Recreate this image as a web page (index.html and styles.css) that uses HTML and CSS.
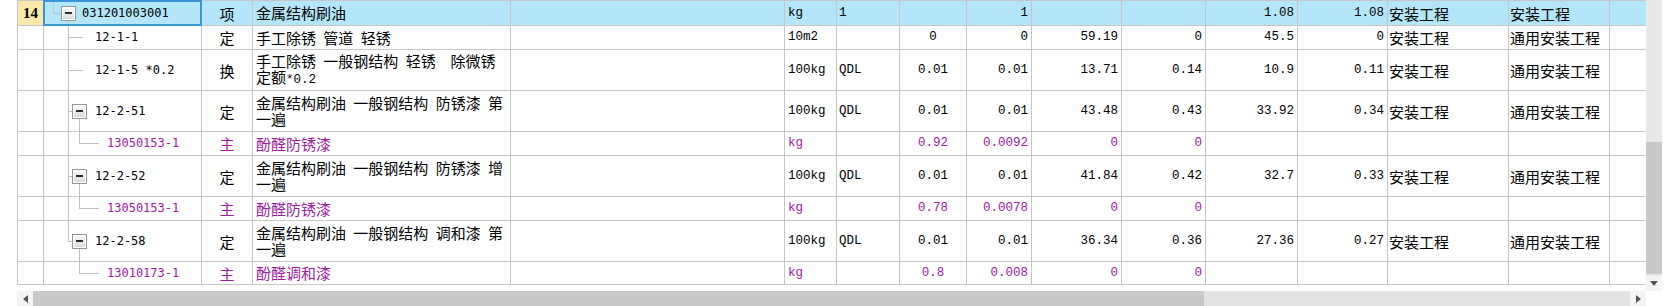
FILE: index.html
```html
<!DOCTYPE html>
<html lang="zh-CN">
<head>
<meta charset="utf-8">
<title>分部分项</title>
<link rel="stylesheet" href="styles.css">
</head>
<body>
<div class="window">
  <div class="gutter"></div>
  <div class="sheet">
    <div class="grid">
      <div class="row sel">
        <div class="hdr">14</div>
        <div class="tree"><span class="ind0"></span><span class="elbow w8"></span><span class="boxcol"><span class="box"></span></span><span class="code t6">031201003001</span></div>
        <div class="c">项</div>
        <div class="l name"><span class="txt">金属结构刷油</span></div>
        <div></div>
        <div class="l n">kg</div>
        <div class="l2 n">1</div>
        <div></div>
        <div class="r n">1</div>
        <div></div>
        <div></div>
        <div class="r n">1.08</div>
        <div class="r n">1.08</div>
        <div class="l1">安装工程</div>
        <div class="l1">安装工程</div>
        <div></div>
      </div>

      <div class="row">
        <div></div>
        <div class="tree"><span class="ind1"></span><span class="tee w15"></span><span class="code t12">12-1-1</span></div>
        <div class="c">定</div>
        <div class="l name"><span class="txt">手工除锈 管道 轻锈</span></div>
        <div></div>
        <div class="l n">10m2</div>
        <div></div>
        <div class="c n">0</div>
        <div class="r n">0</div>
        <div class="r n">59.19</div>
        <div class="r n">0</div>
        <div class="r n">45.5</div>
        <div class="r n">0</div>
        <div class="l1">安装工程</div>
        <div class="l1">通用安装工程</div>
        <div></div>
      </div>

      <div class="row">
        <div></div>
        <div class="tree"><span class="ind1"></span><span class="tee w15"></span><span class="code t12">12-1-5 *0.2</span></div>
        <div class="c">换</div>
        <div class="l name"><span class="txt">手工除锈 一般钢结构 轻锈  除微锈<br>定额<span class="n">*0.2</span></span></div>
        <div></div>
        <div class="l n">100kg</div>
        <div class="l2 n">QDL</div>
        <div class="c n">0.01</div>
        <div class="r n">0.01</div>
        <div class="r n">13.71</div>
        <div class="r n">0.14</div>
        <div class="r n">10.9</div>
        <div class="r n">0.11</div>
        <div class="l1">安装工程</div>
        <div class="l1">通用安装工程</div>
        <div></div>
      </div>

      <div class="row">
        <div></div>
        <div class="tree"><span class="ind1"></span><span class="tee w4"></span><span class="boxcol"><span class="box"></span></span><span class="code t8">12-2-51</span></div>
        <div class="c">定</div>
        <div class="l name"><span class="txt">金属结构刷油 一般钢结构 防锈漆 第<br>一遍</span></div>
        <div></div>
        <div class="l n">100kg</div>
        <div class="l2 n">QDL</div>
        <div class="c n">0.01</div>
        <div class="r n">0.01</div>
        <div class="r n">43.48</div>
        <div class="r n">0.43</div>
        <div class="r n">33.92</div>
        <div class="r n">0.34</div>
        <div class="l1">安装工程</div>
        <div class="l1">通用安装工程</div>
        <div></div>
      </div>

      <div class="row sub">
        <div></div>
        <div class="tree"><span class="ind1"></span><span class="guide"></span><span class="elbow w20"></span><span class="code t8">13050153-1</span></div>
        <div class="c">主</div>
        <div class="l name"><span class="txt">酚醛防锈漆</span></div>
        <div></div>
        <div class="l n">kg</div>
        <div></div>
        <div class="c n">0.92</div>
        <div class="r n">0.0092</div>
        <div class="r n">0</div>
        <div class="r n">0</div>
        <div></div>
        <div></div>
        <div></div>
        <div></div>
        <div></div>
      </div>

      <div class="row">
        <div></div>
        <div class="tree"><span class="ind1"></span><span class="tee w4"></span><span class="boxcol"><span class="box"></span></span><span class="code t8">12-2-52</span></div>
        <div class="c">定</div>
        <div class="l name"><span class="txt">金属结构刷油 一般钢结构 防锈漆 增<br>一遍</span></div>
        <div></div>
        <div class="l n">100kg</div>
        <div class="l2 n">QDL</div>
        <div class="c n">0.01</div>
        <div class="r n">0.01</div>
        <div class="r n">41.84</div>
        <div class="r n">0.42</div>
        <div class="r n">32.7</div>
        <div class="r n">0.33</div>
        <div class="l1">安装工程</div>
        <div class="l1">通用安装工程</div>
        <div></div>
      </div>

      <div class="row sub">
        <div></div>
        <div class="tree"><span class="ind1"></span><span class="guide"></span><span class="elbow w20"></span><span class="code t8">13050153-1</span></div>
        <div class="c">主</div>
        <div class="l name"><span class="txt">酚醛防锈漆</span></div>
        <div></div>
        <div class="l n">kg</div>
        <div></div>
        <div class="c n">0.78</div>
        <div class="r n">0.0078</div>
        <div class="r n">0</div>
        <div class="r n">0</div>
        <div></div>
        <div></div>
        <div></div>
        <div></div>
        <div></div>
      </div>

      <div class="row">
        <div></div>
        <div class="tree"><span class="ind1"></span><span class="elbow w4"></span><span class="boxcol"><span class="box"></span></span><span class="code t8">12-2-58</span></div>
        <div class="c">定</div>
        <div class="l name"><span class="txt">金属结构刷油 一般钢结构 调和漆 第<br>一遍</span></div>
        <div></div>
        <div class="l n">100kg</div>
        <div class="l2 n">QDL</div>
        <div class="c n">0.01</div>
        <div class="r n">0.01</div>
        <div class="r n">36.34</div>
        <div class="r n">0.36</div>
        <div class="r n">27.36</div>
        <div class="r n">0.27</div>
        <div class="l1">安装工程</div>
        <div class="l1">通用安装工程</div>
        <div></div>
      </div>

      <div class="row sub">
        <div></div>
        <div class="tree"><span class="ind2"></span><span class="elbow w20"></span><span class="code t8">13010173-1</span></div>
        <div class="c">主</div>
        <div class="l name"><span class="txt">酚醛调和漆</span></div>
        <div></div>
        <div class="l n">kg</div>
        <div></div>
        <div class="c n">0.8</div>
        <div class="r n">0.008</div>
        <div class="r n">0</div>
        <div class="r n">0</div>
        <div></div>
        <div></div>
        <div></div>
        <div></div>
        <div></div>
      </div>
    </div>
  </div>

  <div class="vscroll">
    <div class="vtrack"><div class="vthumb"></div></div>
    <div class="sbtn"><svg width="8" height="5" viewBox="0 0 8 5"><path d="M0 0H8L4 5Z" fill="#555"/></svg></div>
  </div>

  <div class="hscroll">
    <div class="sbtn hbtn"><svg width="5" height="8" viewBox="0 0 5 8"><path d="M5 0V8L0 4Z" fill="#555"/></svg></div>
    <div class="htrack"><div class="hthumb"></div></div>
    <div class="sbtn hbtn"><svg width="5" height="8" viewBox="0 0 5 8"><path d="M0 0V8L5 4Z" fill="#555"/></svg></div>
  </div>
</div>
</body>
</html>
```

FILE: styles.css
```css
* { box-sizing: border-box; }

html, body {
  margin: 0;
  padding: 0;
  background: #fff;
}

body {
  font-family: "Noto Sans CJK SC", sans-serif;
  font-size: 15px;
  line-height: 17px;
  color: #000;
}

.window {
  display: grid;
  grid-template-columns: 17px 1629px 16px 4px;
  grid-template-rows: 291px 15px;
  width: 1666px;
  height: 306px;
  overflow: hidden;
}

.gutter { grid-column: 1; grid-row: 1 / 3; }

.sheet { grid-column: 2; grid-row: 1; }

.grid {
  display: grid;
  grid-template-columns: 25px 157px 50px 257px 273px 51px 62px 66px 64px 89px 83px 91px 89px 120px 100px 36px;
  grid-template-rows: 24px 23px 40px 40px 23px 40px 23px 40px 22px;
  gap: 1px;
  padding: 1px 0 1px 1px;
  background: #c6c6c6;
}

.row { display: contents; }

.row > div {
  background: #fff;
  display: flex;
  align-items: center;
  overflow: hidden;
  white-space: nowrap;
  min-width: 0;
}

.row.sel > div { background: #b3e6f8; }

.row.sel > .hdr {
  background: #fce8a9;
  justify-content: center;
  font-family: "Liberation Serif", serif;
  font-weight: bold;
  font-size: 15px;
}

.row.sub > div { color: #a0209e; }

.l { padding-left: 3px; }
.l1 { padding-left: 1px; }
.l2 { padding-left: 2px; }
.r { justify-content: flex-end; padding-right: 3px; }
.c { justify-content: center; }

.txt {
  display: block;
  white-space: pre;
  word-spacing: 4px;
  line-height: 16px;
}

.txt .n { word-spacing: 0; }

.n {
  font-family: "Liberation Mono", monospace;
  font-size: 12.5px;
}

.code {
  font-family: "DejaVu Sans Mono", monospace;
  font-size: 12px;
  align-self: center;
  flex-shrink: 0;
}

/* tree column */
.row > .tree { align-items: stretch; }

.ind0 { width: 9px; flex-shrink: 0; }
.ind1 { width: 24px; flex-shrink: 0; }
.ind2 { width: 35px; flex-shrink: 0; }

.w4 { width: 4px; }
.w8 { width: 8px; }
.w15 { width: 15px; }
.w20 { width: 20px; }

.tee, .elbow {
  display: flex;
  flex-direction: column;
  flex-shrink: 0;
}

.tee::before, .elbow::before {
  content: "";
  flex: 1;
  border-left: 1px solid #c2c2c2;
  border-bottom: 1px solid #c2c2c2;
}

.tee::after, .elbow::after {
  content: "";
  flex: 1;
}

.tee::after { border-left: 1px solid #c2c2c2; }

.guide {
  width: 11px;
  flex-shrink: 0;
  border-left: 1px solid #c2c2c2;
}

.boxcol {
  width: 15px;
  flex-shrink: 0;
  display: flex;
  flex-direction: column;
  align-items: center;
}

.boxcol::before {
  content: "";
  flex: 1;
}

.boxcol::after {
  content: "";
  flex: 1;
  width: 1px;
  border-left: 1px solid #c2c2c2;
}

.box {
  width: 15px;
  height: 15px;
  flex-shrink: 0;
  border: 1px solid #959595;
  background: linear-gradient(#fbfbfb, #d8d8d8);
  box-shadow: inset 0 0 0 1px #fff;
  display: flex;
  align-items: center;
  justify-content: center;
}

.box::after {
  content: "";
  width: 7px;
  height: 2px;
  background: #2a2a2a;
}

.t6 { margin-left: 6px; }
.t8 { margin-left: 8px; }
.t12 { margin-left: 12px; }

.row.sel > .tree {
  outline: 2px solid #3b97d3;
  outline-offset: -1px;
}

/* scrollbars */
.vscroll {
  grid-column: 3;
  grid-row: 1;
  display: flex;
  flex-direction: column;
}

.vtrack {
  flex: 1;
  background: #e8e8e8;
  padding: 142px 0 2px;
  display: flex;
  flex-direction: column;
}

.vthumb {
  flex: 1;
  background: #c9c9c9;
}

.sbtn {
  height: 15px;
  background: #f4f4f4;
  display: flex;
  align-items: center;
  justify-content: center;
  flex-shrink: 0;
}

.hscroll {
  grid-column: 2;
  grid-row: 2;
  display: flex;
}

.hbtn { width: 16px; }

.htrack {
  flex: 1;
  background: #e3e3e3;
  display: flex;
}

.hthumb {
  width: 1171px;
  background: #c9c9c9;
}
```
